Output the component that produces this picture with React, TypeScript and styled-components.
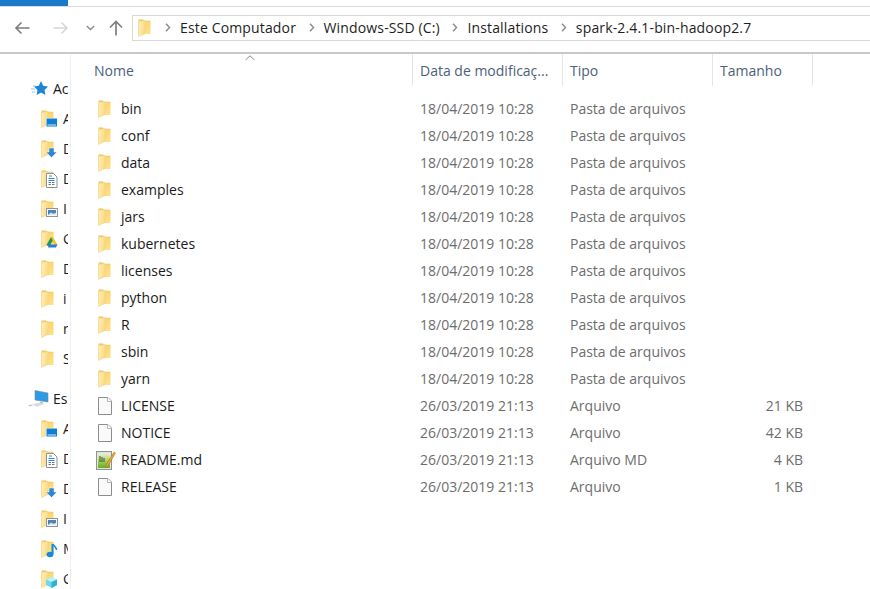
import React from 'react';
import styled, { createGlobalStyle } from 'styled-components';

const GlobalStyle = createGlobalStyle`
  html, body {
    margin: 0;
    padding: 0;
    background: #fff;
    overflow: hidden;
  }
  body {
    font-family: 'Open Sans', 'Noto Sans', sans-serif;
  }
`;

type Overlay = 'none' | 'desktop' | 'download' | 'doc' | 'image' | 'drive' | 'music' | 'cube';

const FolderIcon: React.FC<{ overlay?: Overlay }> = ({ overlay = 'none' }) => (
  <IconSvg width="18" height="18" viewBox="0 0 18 18">
    <defs>
      <linearGradient id="folderFront" x1="0" y1="0" x2="1" y2="0.3">
        <stop offset="0" stopColor="#ffefbd" />
        <stop offset="1" stopColor="#fbdc85" />
      </linearGradient>
      <linearGradient id="folderBack" x1="0" y1="0" x2="0" y2="1">
        <stop offset="0" stopColor="#eebf55" />
        <stop offset="0.2" stopColor="#fbd774" />
        <stop offset="1" stopColor="#fee08a" />
      </linearGradient>
    </defs>
    <path d="M.5.5h4.500l1 1.200h6.500v13.300H.5z" fill="url(#folderBack)" />
    <path d="M.5 2.500L7 1.500V14.500L.5 17.500z" fill="url(#folderFront)" stroke="#efcd7c" strokeWidth=".5" />
    {overlay === 'desktop' && (
      <g>
        <rect x="5" y="8" width="11.500" height="9" fill="#fff" />
        <rect x="5.500" y="8.500" width="10.500" height="8" fill="#0f7fd6" />
        <rect x="6.500" y="14.500" width="8.500" height="1" fill="#d8edfb" />
      </g>
    )}
    {overlay === 'download' && (
      <path d="M8 8h5v4h3l-5.500 5.500L5 12h3z" fill="#2f86d4" stroke="#fff" strokeWidth=".5" />
    )}
    {overlay === 'doc' && (
      <g>
        <path d="M5.500 3.500h7l3.500 3.500v10.500H5.500z" fill="#fff" stroke="#8b9095" />
        <path d="M8 6h3M7.500 8.500h6M7.500 10.500h6" stroke="#2d87d8" strokeWidth="1" />
        <path d="M7.500 12.500h2.500M11 12.500h2.500M7.500 14.500h2.500M11 14.500h2.500" stroke="#6d7a85" strokeWidth="1" />
      </g>
    )}
    {overlay === 'image' && (
      <g>
        <rect x="5.500" y="8.500" width="11" height="8" fill="#f7f7f7" stroke="#8f959a" />
        <rect x="7" y="10" width="8" height="5" fill="#4a85b5" />
        <path d="M7 15l3-2.500 2 1.200 3-.7V15z" fill="#dfe7ec" />
      </g>
    )}
    {overlay === 'drive' && (
      <g>
        <path d="M10 7l2 0 4.500 8h-3.500z" fill="#f5c518" />
        <path d="M10 7l1.800 3.500L8.300 17 5.500 15z" fill="#1f9a57" />
        <path d="M8 14.500h8.500L15 17.500H7z" fill="#2f78e0" />
      </g>
    )}
    {overlay === 'music' && (
      <g>
        <path d="M11.500 4v10" stroke="#0f8be0" strokeWidth="2" />
        <path d="M12 4c1 2.500 3.500 3 3.500 6" stroke="#0f8be0" strokeWidth="1.500" fill="none" />
        <ellipse cx="9" cy="14.500" rx="3.400" ry="2.800" fill="#0f8be0" />
      </g>
    )}
    {overlay === 'cube' && (
      <g>
        <path d="M10.500 7l5.500 2.500v5.500l-5.500 3-5.500-3V9.500z" fill="#6fd9ea" />
        <path d="M5 9.500l5.500 2.500 5.500-2.500-5.500-2.500z" fill="#bff0f7" />
        <path d="M10.500 12v6l5.500-3V9.500z" fill="#2bb4d0" />
      </g>
    )}
  </IconSvg>
);

const FileIcon = () => (
  <IconSvg width="18" height="18" viewBox="0 0 18 18">
    <path d="M2.500 .5h9.500l3.500 3.500v13.500h-13z" fill="#fafafa" stroke="#8c8c8c" />
    <path d="M11.500 .5v4h4" fill="#fff" stroke="#b5b5b5" />
  </IconSvg>
);

const NotepadIcon = () => (
  <IconSvg width="20" height="20" viewBox="0 0 20 20">
    <defs>
      <linearGradient id="padGreen" x1="0" y1="0" x2="0" y2="1">
        <stop offset="0" stopColor="#e7f0cf" />
        <stop offset="0.5" stopColor="#a3d05a" />
        <stop offset="1" stopColor="#63ad2a" />
      </linearGradient>
    </defs>
    <rect x=".5" y="1.500" width="15" height="18" fill="#e3e6e0" stroke="#8e938c" />
    <rect x="2" y="4" width="12" height="14" fill="url(#padGreen)" />
    <path d="M4 6v6M6 7v5M8 8v4" stroke="#46503c" strokeWidth="1" />
    <path d="M10 15L18 2l1.500 1L12 16l-2.500 1.500z" fill="#efa52d" stroke="#a9681a" strokeWidth=".5" />
  </IconSvg>
);

const StarIcon = () => (
  <IconSvg width="17" height="16" viewBox="0 0 17 16">
    <path d="M10 0l2.200 4.800 4.800.7-3.500 3.400.9 5.100-4.400-2.500-4.400 2.500.9-5.100L3 5.500l4.800-.7z" fill="#1a84d8" />
    <path d="M2 5h3M0 8h4M1 11h3" stroke="#8cc4ee" strokeWidth="1" />
  </IconSvg>
);

const ComputerIcon = () => (
  <IconSvg width="22" height="18" viewBox="0 0 22 18">
    <path d="M7 .5l13 2.500v9L7 10z" fill="#2b9be8" stroke="#7a8a96" strokeWidth=".6" />
    <path d="M12 11.500l3 .5v2l-3-.5z" fill="#b9bec2" />
    <path d="M4 14.500l7-2 5 1.500-7 3z" fill="#d9dcde" />
    <path d="M0 15.500l3-1 2 .8-3 1.200z" fill="#bfc3c6" />
  </IconSvg>
);

const BackIcon: React.FC<{ color: string }> = ({ color }) => (
  <IconSvg width="16" height="14" viewBox="0 0 16 14">
    <path d="M15.500 7H2M7.500 1.500L2 7l5.500 5.500" fill="none" stroke={color} strokeWidth="1.600" />
  </IconSvg>
);

const ForwardIcon: React.FC<{ color: string }> = ({ color }) => (
  <IconSvg width="16" height="14" viewBox="0 0 16 14">
    <path d="M.5 7h13M8.500 1.500L14 7l-5.500 5.500" fill="none" stroke={color} strokeWidth="1.600" />
  </IconSvg>
);

const ChevronDown = () => (
  <IconSvg width="9" height="6" viewBox="0 0 9 6">
    <path d="M.8 1l3.700 3.500L8.200 1" fill="none" stroke="#8b8b8b" strokeWidth="1.500" />
  </IconSvg>
);

const UpIcon = () => (
  <IconSvg width="14" height="16" viewBox="0 0 14 16">
    <path d="M7 15.500V2M1 7.500L7 1.500l6 6" fill="none" stroke="#7f7f7f" strokeWidth="1.700" />
  </IconSvg>
);

const Crumb = () => (
  <IconSvg width="6" height="9" viewBox="0 0 6 9">
    <path d="M1 .8L4.500 4.500 1 8.200" fill="none" stroke="#8a8a8a" strokeWidth="1.400" />
  </IconSvg>
);

const SortCaret = () => (
  <IconSvg width="10" height="6" viewBox="0 0 10 6">
    <path d="M.5 5L5 .8 9.500 5" fill="none" stroke="#8a8a8a" strokeWidth="1" />
  </IconSvg>
);

interface NavEntry {
  label: string;
  overlay: Overlay;
}

// the pane is scrolled so narrow that only the first letters show
const quickAccess: NavEntry[] = [
  { label: 'A', overlay: 'desktop' },
  { label: 'D', overlay: 'download' },
  { label: 'D', overlay: 'doc' },
  { label: 'I', overlay: 'image' },
  { label: 'G', overlay: 'drive' },
  { label: 'D', overlay: 'none' },
  { label: 'i', overlay: 'none' },
  { label: 'r', overlay: 'none' },
  { label: 'S', overlay: 'none' },
];

const thisPc: NavEntry[] = [
  { label: 'A', overlay: 'desktop' },
  { label: 'D', overlay: 'doc' },
  { label: 'D', overlay: 'download' },
  { label: 'I', overlay: 'image' },
  { label: 'M', overlay: 'music' },
  { label: 'G', overlay: 'cube' },
];

type FileKind = 'folder' | 'file' | 'notepad';

interface FileEntry {
  name: string;
  date: string;
  type: string;
  size?: string;
  kind: FileKind;
}

const FOLDER_DATE = '18/04/2019 10:28';
const FILE_DATE = '26/03/2019 21:13';

const files: FileEntry[] = [
  ...['bin', 'conf', 'data', 'examples', 'jars', 'kubernetes', 'licenses', 'python', 'R', 'sbin', 'yarn'].map(
    (name): FileEntry => ({ name, date: FOLDER_DATE, type: 'Pasta de arquivos', kind: 'folder' }),
  ),
  { name: 'LICENSE', date: FILE_DATE, type: 'Arquivo', size: '21 KB', kind: 'file' },
  { name: 'NOTICE', date: FILE_DATE, type: 'Arquivo', size: '42 KB', kind: 'file' },
  { name: 'README.md', date: FILE_DATE, type: 'Arquivo MD', size: '4 KB', kind: 'notepad' },
  { name: 'RELEASE', date: FILE_DATE, type: 'Arquivo', size: '1 KB', kind: 'file' },
];

const renderFileIcon = (kind: FileKind) => {
  switch (kind) {
    case 'folder':
      return <FolderIcon />;
    case 'notepad':
      return <NotepadIcon />;
    default:
      return <FileIcon />;
  }
};

export default function App() {
  return (
    <Window>
      <GlobalStyle />
      <TitleStrip>
        <RibbonTab />
      </TitleStrip>
      <Toolbar>
        <NavButton $width={16}><BackIcon color="#7c7c7c" /></NavButton>
        <NavButton $width={16} $margin={23}><ForwardIcon color="#d6d6d6" /></NavButton>
        <NavButton $width={9} $margin={17}><ChevronDown /></NavButton>
        <NavButton $width={14} $margin={14}><UpIcon /></NavButton>
        <AddressBar>
          <AddressFolder><FolderIcon /></AddressFolder>
          <Crumb />
          <CrumbText>Este Computador</CrumbText>
          <Crumb />
          <CrumbText>Windows-SSD (C:)</CrumbText>
          <Crumb />
          <CrumbText>Installations</CrumbText>
          <Crumb />
          <CrumbText>spark-2.4.1-bin-hadoop2.7</CrumbText>
        </AddressBar>
      </Toolbar>
      <Body>
        <Sidebar>
          <SideClip>
            <NavHeading>
              <HeadingIcon $inset={3}><StarIcon /></HeadingIcon>
              <NavLabel>Ac</NavLabel>
            </NavHeading>
            {quickAccess.map((entry, index) => (
              <NavItem key={index}>
                <FolderIcon overlay={entry.overlay} />
                <NavLabel>{entry.label}</NavLabel>
              </NavItem>
            ))}
            <NavHeading $spaced>
              <HeadingIcon><ComputerIcon /></HeadingIcon>
              <NavLabel>Es</NavLabel>
            </NavHeading>
            {thisPc.map((entry, index) => (
              <NavItem key={index}>
                <FolderIcon overlay={entry.overlay} />
                <NavLabel>{entry.label}</NavLabel>
              </NavItem>
            ))}
          </SideClip>
        </Sidebar>
        <Content>
          <SortMark><SortCaret /></SortMark>
          <HeaderRow>
            <HeaderCell>Nome</HeaderCell>
            <HeaderCell>Data de modificaç...</HeaderCell>
            <HeaderCell>Tipo</HeaderCell>
            <HeaderCell>Tamanho</HeaderCell>
          </HeaderRow>
          <FileList>
            {files.map((file) => (
              <FileRow key={file.name}>
                <NameCell>
                  <FileIconBox $inset={file.kind === 'folder' ? 2 : 0}>{renderFileIcon(file.kind)}</FileIconBox>
                  {file.name}
                </NameCell>
                <MetaCell>{file.date}</MetaCell>
                <MetaCell>{file.type}</MetaCell>
                <SizeCell>{file.size}</SizeCell>
              </FileRow>
            ))}
          </FileList>
        </Content>
      </Body>
    </Window>
  );
}

const IconSvg = styled.svg`
  flex: none;
  display: block;
`;

const Window = styled.div`
  width: 870px;
  height: 589px;
  display: flex;
  flex-direction: column;
  overflow: hidden;
  background: #fff;
`;

const TitleStrip = styled.div`
  height: 6px;
  border-bottom: 1px solid #dadada;
  flex: none;
`;

const RibbonTab = styled.div`
  width: 68px;
  height: 6px;
  background: #1979ca;
`;

const Toolbar = styled.div`
  height: 47px;
  box-sizing: border-box;
  flex: none;
  display: flex;
  align-items: center;
  padding: 0 0 4px 14px;
  border-bottom: 2px solid #c9c9c9;
`;

const NavButton = styled.div<{ $width: number; $margin?: number }>`
  width: ${({ $width }) => $width}px;
  margin-left: ${({ $margin }) => $margin ?? 0}px;
  height: 20px;
  display: flex;
  align-items: center;
  justify-content: center;
  flex: none;
`;

const AddressBar = styled.div`
  margin-left: 9px;
  flex: 1;
  height: 26px;
  box-sizing: border-box;
  border: 1px solid #d9d9d9;
  border-right: none;
  display: flex;
  align-items: center;
  padding-left: 5px;
  gap: 9px;
`;

const AddressFolder = styled.div`
  width: 16px;
  height: 18px;
  margin-right: 2px;
`;

const CrumbText = styled.span`
  font-size: 14px;
  letter-spacing: 0.15px;
  color: #1e1e1e;
  white-space: nowrap;
  margin-right: 3.500px;
`;

const Body = styled.div`
  flex: 1;
  display: flex;
  min-height: 0;
`;

const Sidebar = styled.div`
  width: 71px;
  flex: none;
  box-sizing: border-box;
  border-right: 1px solid #f0f0f0;
`;

const SideClip = styled.div`
  width: 68px;
  height: 100%;
  overflow: hidden;
  padding-top: 20px;
  box-sizing: border-box;
`;

const NavHeading = styled.div<{ $spaced?: boolean }>`
  height: 30px;
  margin-top: ${({ $spaced }) => ($spaced ? 10 : 0)}px;
  padding-left: 28px;
  display: flex;
  align-items: center;
  font-size: 14px;
  color: #1a1a1a;
`;

const HeadingIcon = styled.div<{ $inset?: number }>`
  width: 25px;
  box-sizing: border-box;
  padding-left: ${({ $inset }) => $inset ?? 0}px;
  flex: none;
  display: flex;
`;

const NavItem = styled.div`
  height: 30px;
  padding-left: 41px;
  display: flex;
  align-items: center;
  gap: 4px;
  font-size: 14px;
  color: #1a1a1a;
`;

const NavLabel = styled.span`
  flex: 1;
  min-width: 0;
  line-height: 26px;
  overflow: hidden;
  white-space: nowrap;
`;

const Content = styled.div`
  flex: 1;
  position: relative;
  min-width: 0;
`;

const SortMark = styled.div`
  position: absolute;
  left: 174px;
  top: 1px;
  line-height: 0;
`;

const HeaderRow = styled.div`
  height: 32px;
  padding-left: 16px;
  display: grid;
  grid-template-columns: 326px 150px 150px 100px;
`;

const HeaderCell = styled.div`
  padding-left: 7px;
  font-size: 14px;
  line-height: 33px;
  color: #4c607a;
  white-space: nowrap;
  overflow: hidden;
  border-right: 1px solid #e5e5e5;
`;

const FileList = styled.div`
  padding-top: 9px;
`;

const FileRow = styled.div`
  height: 27px;
  padding-left: 16px;
  display: grid;
  grid-template-columns: 326px 150px 150px 100px;
  align-items: center;
  font-size: 14px;
  white-space: nowrap;
`;

const NameCell = styled.div`
  display: flex;
  align-items: center;
  padding-left: 9px;
  color: #1a1a1a;
`;

const FileIconBox = styled.div<{ $inset: number }>`
  width: 25px;
  height: 20px;
  box-sizing: border-box;
  padding-left: ${({ $inset }) => $inset}px;
  flex: none;
  display: flex;
  align-items: center;
`;

const MetaCell = styled.div`
  padding-left: 7px;
  color: #6d6d6d;
`;

const SizeCell = styled(MetaCell)`
  text-align: right;
  padding-right: 10px;
`;
